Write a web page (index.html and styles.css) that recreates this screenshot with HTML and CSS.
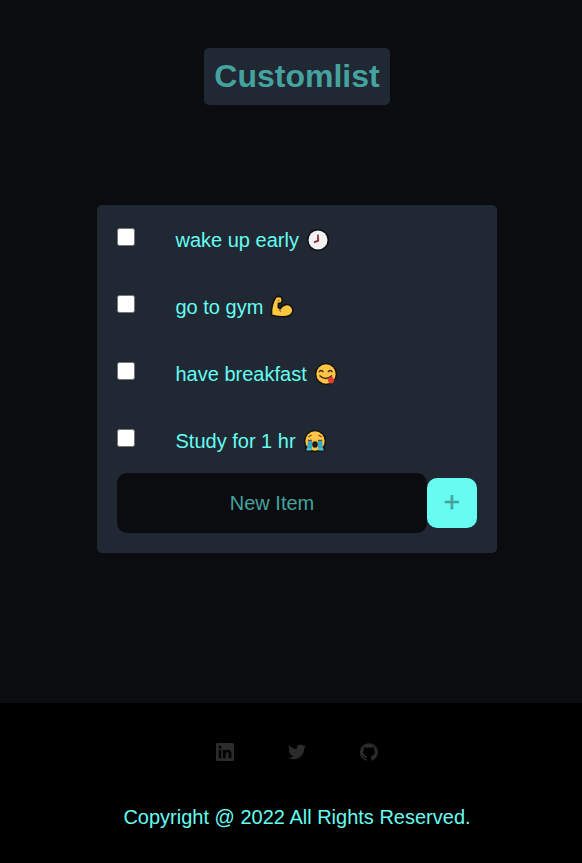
FILE: index.html
```html
<!DOCTYPE html>
<html lang="en">
<head>
<meta charset="utf-8">
<title>Customlist</title>
<link rel="stylesheet" href="styles.css">
</head>
<body>
<header class="header"><h1 class="title">Customlist</h1></header>
<main class="card">
  <label class="item"><input class="check" type="checkbox"><span class="text">wake up early
    <svg class="emoji" viewBox="0 0 24 24"><circle cx="12" cy="12" r="11" fill="#101014"/><circle cx="12" cy="12" r="9.500" fill="#f3f1f1"/><path d="M12 6.500v6L8 14.500" fill="none" stroke="#4a3438" stroke-width="1.500"/><path d="M12.300 9.500v3.200l-2 1" fill="none" stroke="#b52c3c" stroke-width="1.600"/></svg></span></label>
  <label class="item"><input class="check" type="checkbox"><span class="text">go to gym
    <svg class="emoji" viewBox="0 0 24 24"><path d="M5.500 2.500Q8 .5 11.500 2l1 4-1.500 2-2.500.3-.3 4 2 1.500c2-4 7-5.500 10.500-3 3.500 3 2.500 8-1 9.700-4 2-12 1.600-18-.2C1 15 2.500 8 5.500 2.500z" fill="#fdc83e" stroke="#15110f" stroke-width="1.600" stroke-linejoin="round"/><path d="M8.500 15q1.500 0 2.500 2M7.500 6l2-1" fill="none" stroke="#b56d24" stroke-width="1.100"/></svg></span></label>
  <label class="item"><input class="check" type="checkbox"><span class="text">have breakfast
    <svg class="emoji" viewBox="0 0 24 24"><circle cx="12" cy="12" r="11" fill="#17120f"/><circle cx="12" cy="12" r="9.700" fill="#fdc447"/><path d="M5 10q2.200-3 4.400 0M14 10q2.200-3 4.400 0M5.500 13.500q6 6 12.500 0" fill="none" stroke="#3c2418" stroke-width="1.400"/><path d="M13.500 17l4.500-2.500 2.500 3.500q-1 4-4 3.500-2 0-3-4.500z" fill="#dc3f2f"/></svg></span></label>
  <label class="item"><input class="check" type="checkbox"><span class="text">Study for 1 hr
    <svg class="emoji" viewBox="0 0 24 24"><circle cx="12" cy="12" r="11" fill="#17120f"/><path d="M2 17h20v5.500H2z" fill="#17120f"/><circle cx="12" cy="12" r="9.700" fill="#fdc447"/><path d="M5 11.500h4V21H4zM15 11.500h4L20 21h-5z" fill="#36a8bd"/><path d="M4 19h4.500v2.500H3zM15.500 19H20l1 2.500h-5.500z" fill="#4fc0d0"/><path d="M4.800 11q2 1 4 0M15.200 11q2 1 4 0M5.500 8l3-2M18.500 8l-3-2" fill="none" stroke="#6b421e" stroke-width="1.100"/><ellipse cx="12" cy="15.500" rx="2.800" ry="3.300" fill="#211820"/></svg></span></label>
  <form class="form"><input class="new" type="text" placeholder="New Item"><button class="add" type="button">+</button></form>
</main>
<footer class="footer">
  <div class="social">
    <svg class="icon" viewBox="0 0 24 24"><path fill-rule="evenodd" d="M2 0h20a2 2 0 0 1 2 2v20a2 2 0 0 1-2 2H2a2 2 0 0 1-2-2V2a2 2 0 0 1 2-2zm1.600 9v11.400h3.500V9zM5.300 3.300a2 2 0 1 0 0 4.100 2 2 0 0 0 0-4.100zM9.300 9v11.400h3.600v-5.600c0-3.500 4-3.400 4 0v5.600h3.600v-6.300c0-6-5.800-6.300-7.600-3.500V9z"/></svg>
    <svg class="icon" viewBox="0 0 24 24"><path d="M23.950 4.570a10 10 0 0 1-2.820.775 4.960 4.960 0 0 0 2.160-2.720c-.95.555-2.010.96-3.130 1.180a4.920 4.920 0 0 0-8.380 4.480C7.690 8.100 4.070 6.130 1.640 3.160a4.820 4.820 0 0 0-.67 2.480c0 1.710.87 3.210 2.190 4.100a4.900 4.900 0 0 1-2.230-.62v.06a4.920 4.920 0 0 0 3.950 4.830 5 5 0 0 1-2.210.08 4.940 4.940 0 0 0 4.600 3.420A9.870 9.870 0 0 1 0 19.540a13.990 13.990 0 0 0 7.560 2.210c9.050 0 13.990-7.500 13.990-13.980 0-.21 0-.42-.02-.63a9.940 9.940 0 0 0 2.420-2.570z"/></svg>
    <svg class="icon" viewBox="0 0 24 24"><path d="M12 .3a12 12 0 0 0-3.800 23.380c.6.120.83-.26.83-.57L9 21.070c-3.340.72-4.040-1.610-4.040-1.610-.55-1.390-1.340-1.760-1.340-1.760-1.080-.74.090-.73.090-.73 1.200.09 1.840 1.240 1.840 1.240 1.070 1.830 2.810 1.300 3.500 1 .1-.78.420-1.310.76-1.610-2.670-.3-5.470-1.330-5.470-5.930 0-1.310.47-2.380 1.240-3.220-.14-.3-.54-1.520.1-3.180 0 0 1-.32 3.300 1.230a11.500 11.500 0 0 1 6 0c2.280-1.550 3.290-1.230 3.290-1.230.64 1.660.24 2.880.12 3.180a4.650 4.650 0 0 1 1.230 3.220c0 4.610-2.800 5.620-5.480 5.920.42.36.81 1.100.81 2.220l-.01 3.290c0 .31.200.69.820.570A12 12 0 0 0 12 .3"/></svg>
  </div>
  <p class="copyright">Copyright @ 2022 All Rights Reserved.</p>
</footer>
</body>
</html>
```
FILE: styles.css
```css
* { box-sizing: border-box; }
body {
  margin: 0;
  height: 863px;
  display: flex;
  flex-direction: column;
  overflow: hidden;
  background: #0b0c10;
  color: #66fcf1;
  font: 20px/23px "Liberation Sans", Arial, sans-serif;
}
.header, .footer { width: 594px; text-align: center; }
.header { padding-top: 48px; height: 205px; }
.title {
  display: inline-block;
  margin: 0;
  padding: 10px;
  font-size: 32px;
  line-height: 37px;
  color: #45a29e;
  background: #1f2833;
  border-radius: 5px;
}
.card {
  width: 400px;
  height: 348px;
  margin-left: 97px;
  padding: 0 20px;
  background: #1f2833;
  border-radius: 5px;
}
.item { display: flex; align-items: flex-start; height: 67px; }
.check {
  appearance: none;
  width: 18px;
  height: 18px;
  margin: 23px 40.5px 0 0;
  background: #fff;
  border: 1px solid #767676;
  border-radius: 2.5px;
}
.text { padding-top: 24px; display: flex; gap: 7px; }
.emoji { width: 24px; height: 24px; margin-top: -1px; }
.form { display: flex; align-items: center; margin: 0; }
.new {
  width: 310px;
  height: 60px;
  padding: 0;
  border: 0;
  border-radius: 10px;
  background: #0b0c10;
  color: #66fcf1;
  font: inherit;
  text-align: center;
}
.new::placeholder { color: #45a29e; opacity: 1; }
.add {
  width: 50px;
  height: 50px;
  padding: 0 0 2px;
  border: 0;
  border-radius: 10px;
  background: #66fcf1;
  color: #45a29e;
  font: 28px/48px "Liberation Sans", Arial, sans-serif;
  -webkit-text-stroke: 0.5px #45a29e;
}
.footer { margin-top: 150px; height: 160px; background: #000; }
.social { display: flex; justify-content: center; gap: 54px; padding-top: 40px; }
.icon { width: 18px; height: 18px; fill: #2b2b2b; }
.copyright { margin: 45px 0 0; }
```
